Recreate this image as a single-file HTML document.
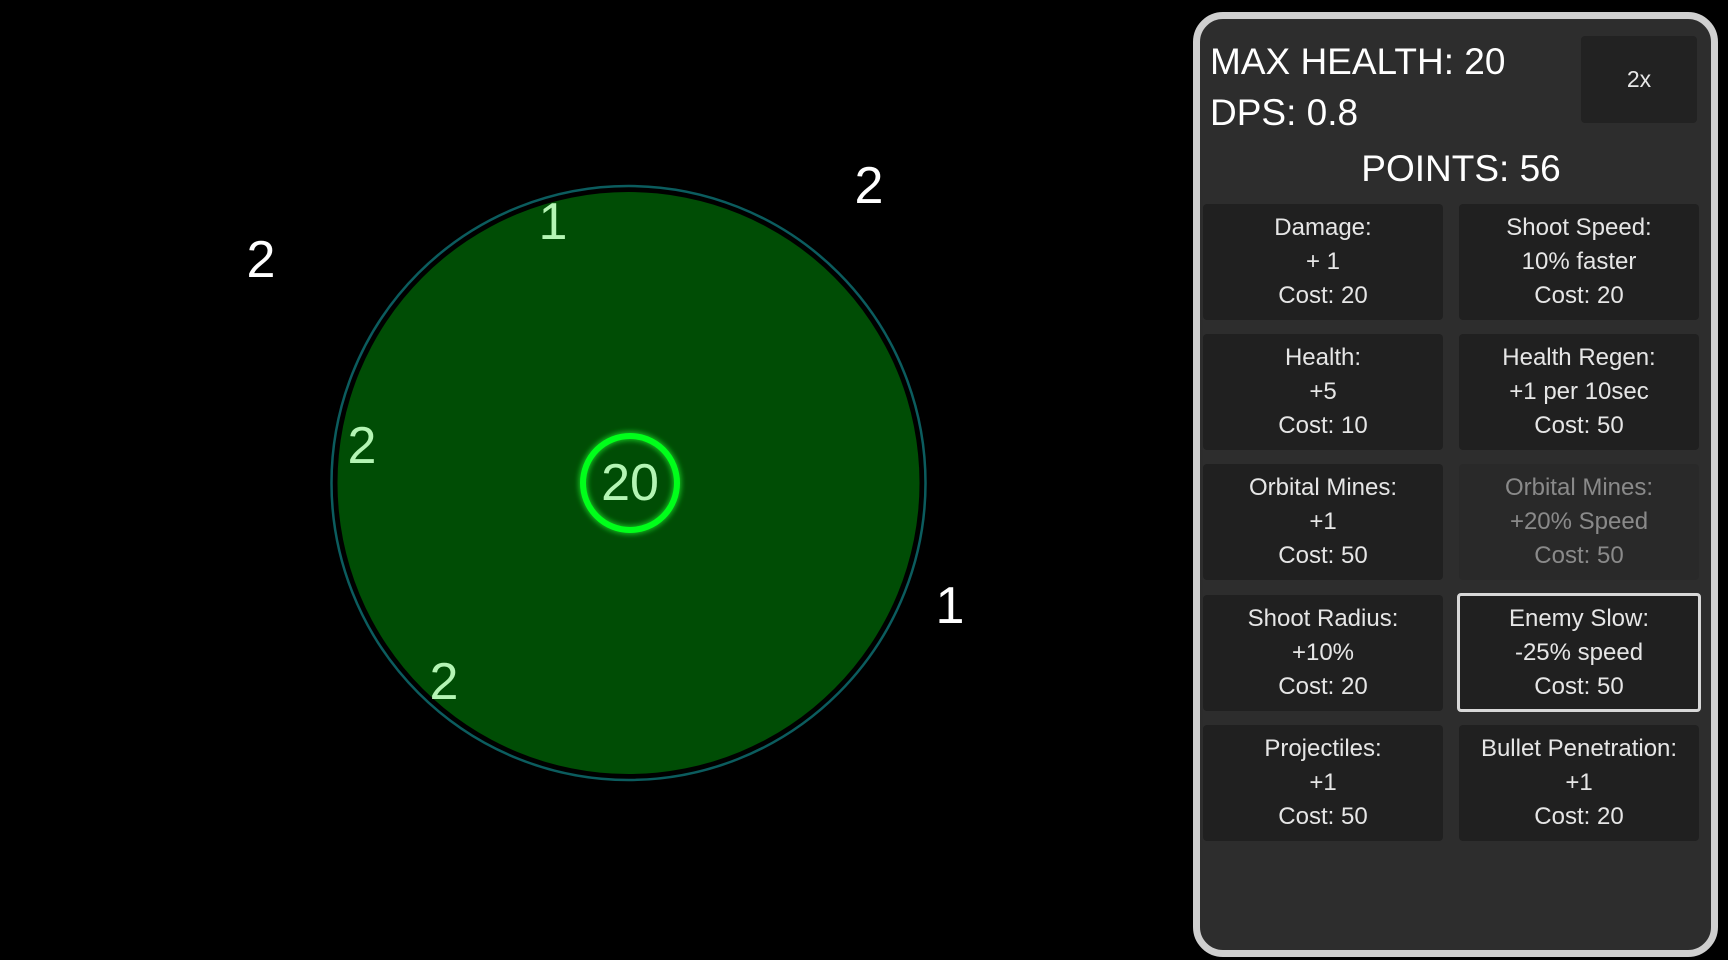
<!DOCTYPE html>
<html><head><meta charset="utf-8"><style>
html,body{margin:0;padding:0;background:#000;width:1728px;height:960px;overflow:hidden;font-family:"Liberation Sans","DejaVu Sans",sans-serif;}
.abs{position:absolute}
.num{position:absolute;font-size:52px;line-height:1;transform:translate(-50%,-50%);}
.g{color:#b4f5b4}.w{color:#fff}
#panel{position:absolute;left:1193px;top:12px;width:511px;height:931px;border:7px solid #cfcfcf;border-radius:30px;background:#2d2d2d;}
.cell{position:absolute;width:240px;height:116px;background:#202020;border-radius:4px;color:#e6e6e6;font-size:24px;text-align:center;box-sizing:border-box;}
.cell div{position:absolute;left:0;right:0;line-height:34px;}
.cell .l1{top:7px}.cell .l2{top:41px}.cell .l3{top:75px}
.dis{background:#292929;color:#8a8a8a}
.sel{border:3px solid #d8d8d8;}
</style></head><body>
<svg class="abs" style="left:0;top:0" width="1180" height="960">
<circle cx="628.5" cy="483" r="297" fill="none" stroke="#0b5c5e" stroke-width="2.5"/>
<circle cx="628.5" cy="483" r="291" fill="#004d05"/>
<defs><filter id="gl" x="-50%" y="-50%" width="200%" height="200%"><feGaussianBlur stdDeviation="3"/></filter></defs>
<circle cx="630" cy="483" r="47" fill="none" stroke="#22ff33" stroke-width="8" filter="url(#gl)" opacity="0.7"/>
<circle cx="630" cy="483" r="47" fill="none" stroke="#00ff1a" stroke-width="6"/>
</svg>
<div class="num g" style="left:630px;top:483px;font-size:52px">20</div>
<div class="num g" style="left:553px;top:222px">1</div>
<div class="num g" style="left:362px;top:446px">2</div>
<div class="num g" style="left:444px;top:682px">2</div>
<div class="num w" style="left:869px;top:186px">2</div>
<div class="num w" style="left:950px;top:606px">1</div>
<div class="num w" style="left:261px;top:260px">2</div>

<div id="panel"></div>
<div class="abs" style="left:1210px;top:36px;color:#fff;font-size:37px;line-height:51px;">MAX HEALTH: 20<br>DPS: 0.8</div>
<div class="abs" style="left:1581px;top:36px;width:116px;height:87px;background:#222;border-radius:4px;color:#e8e8e8;font-size:23px;line-height:87px;text-align:center;">2x</div>
<div class="abs" style="left:1213px;width:496px;top:146px;color:#fff;font-size:37px;line-height:46px;text-align:center;">POINTS: 56</div>

<div class="cell" style="left:1203px;top:204px"><div class="l1">Damage:</div><div class="l2">+ 1</div><div class="l3">Cost: 20</div></div>
<div class="cell" style="left:1459px;top:204px"><div class="l1">Shoot Speed:</div><div class="l2">10% faster</div><div class="l3">Cost: 20</div></div>
<div class="cell" style="left:1203px;top:334px"><div class="l1">Health:</div><div class="l2">+5</div><div class="l3">Cost: 10</div></div>
<div class="cell" style="left:1459px;top:334px"><div class="l1">Health Regen:</div><div class="l2">+1 per 10sec</div><div class="l3">Cost: 50</div></div>
<div class="cell" style="left:1203px;top:464px"><div class="l1">Orbital Mines:</div><div class="l2">+1</div><div class="l3">Cost: 50</div></div>
<div class="cell dis" style="left:1459px;top:464px"><div class="l1">Orbital Mines:</div><div class="l2">+20% Speed</div><div class="l3">Cost: 50</div></div>
<div class="cell" style="left:1203px;top:595px"><div class="l1">Shoot Radius:</div><div class="l2">+10%</div><div class="l3">Cost: 20</div></div>
<div class="cell sel" style="left:1457px;top:593px;width:244px;height:119px"><div class="l1" style="top:6px">Enemy Slow:</div><div class="l2" style="top:40px">-25% speed</div><div class="l3" style="top:74px">Cost: 50</div></div>
<div class="cell" style="left:1203px;top:725px"><div class="l1">Projectiles:</div><div class="l2">+1</div><div class="l3">Cost: 50</div></div>
<div class="cell" style="left:1459px;top:725px"><div class="l1">Bullet Penetration:</div><div class="l2">+1</div><div class="l3">Cost: 20</div></div>
</body></html>
